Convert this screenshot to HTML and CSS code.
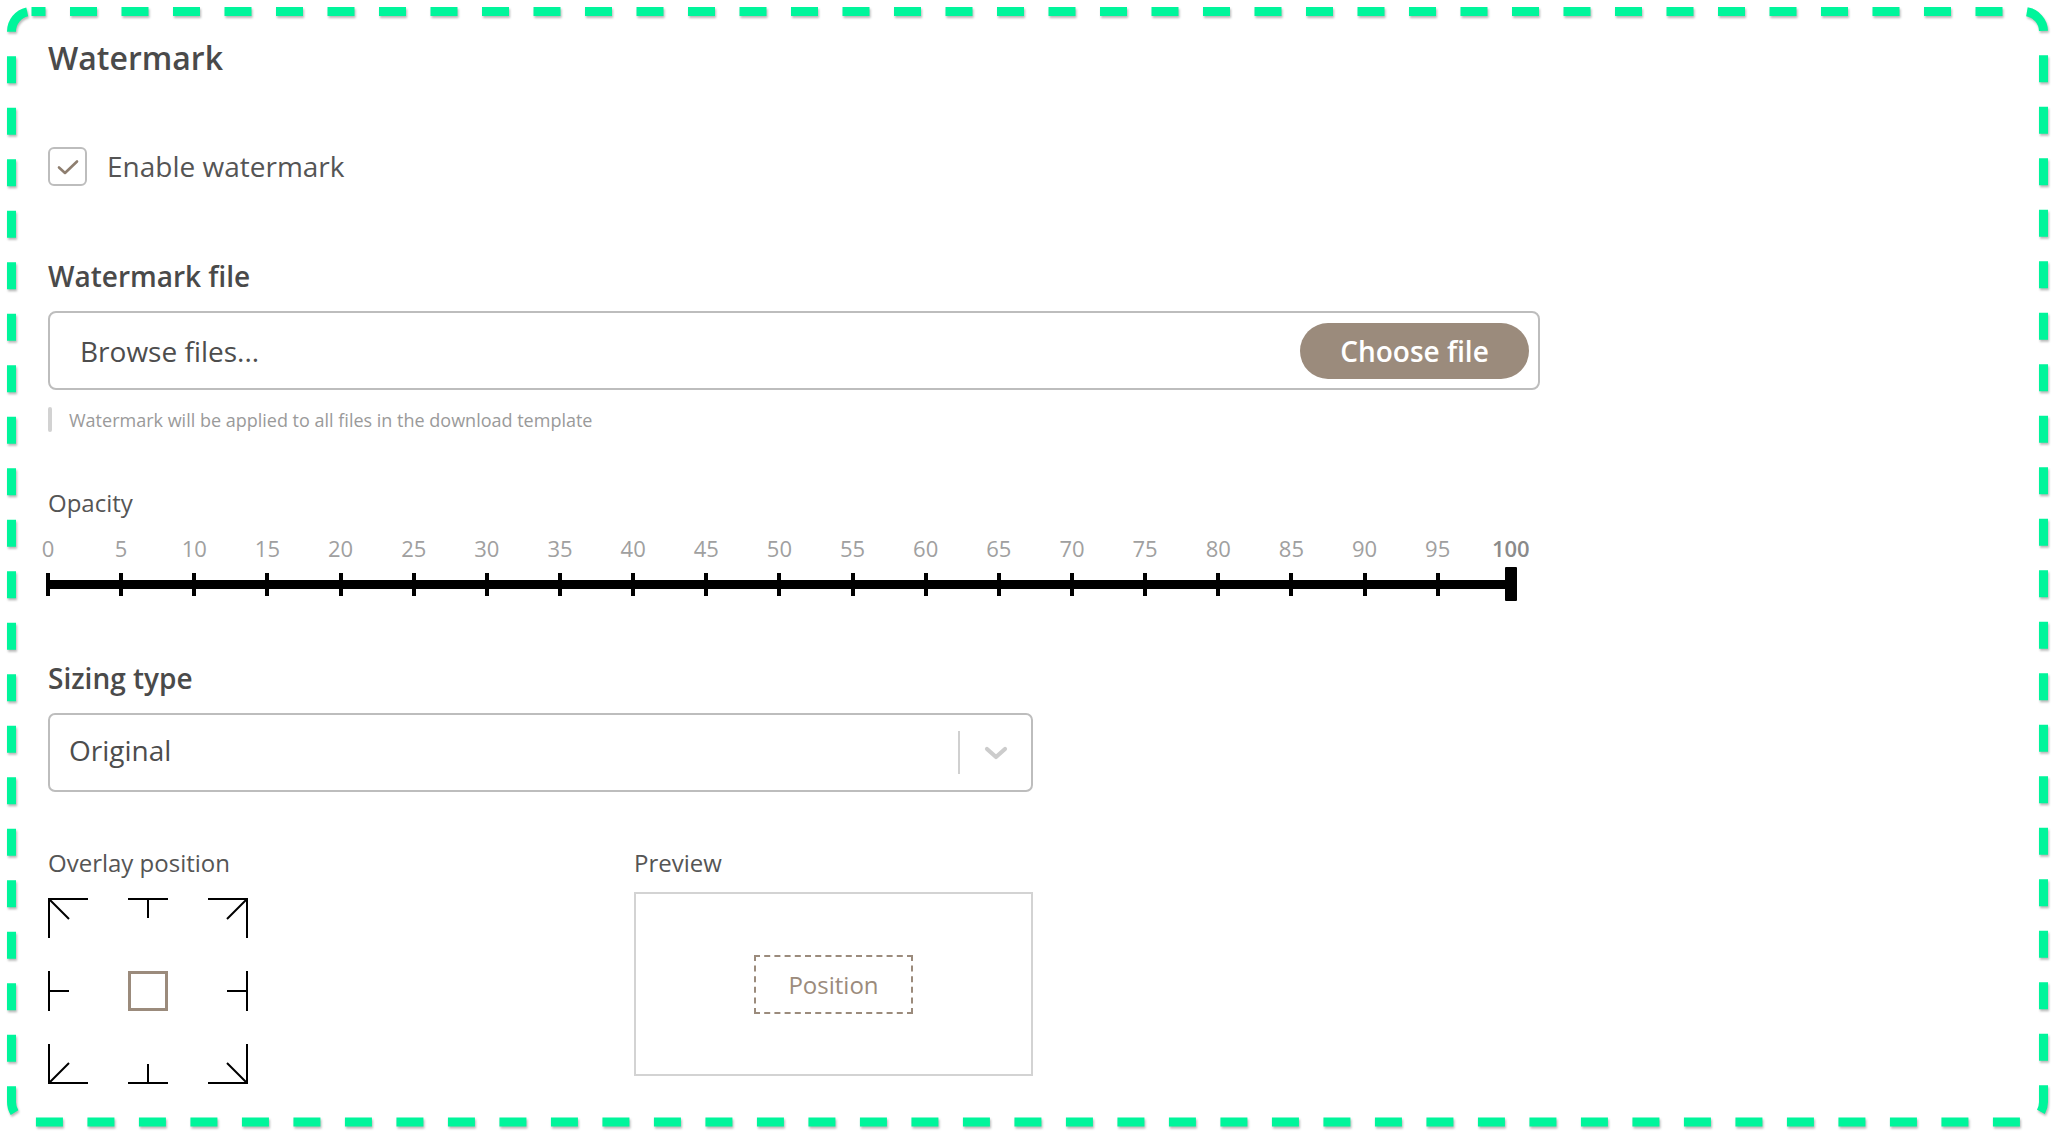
FILE: index.html
```
<!DOCTYPE html>
<html lang="en">
<head>
<meta charset="utf-8">
<title>Watermark</title>
<link rel="stylesheet" href="styles.css">
</head>
<body>
<div class="page">
  <svg class="frame" width="2052" height="1136" viewBox="0 0 2052 1136" aria-hidden="true">
    <rect x="11.5" y="11.5" width="2032" height="1110.5" rx="20" ry="20" />
  </svg>

  <h1 class="title">Watermark</h1>

  <label class="check-row">
    <span class="checkbox">
      <svg width="24" height="18" viewBox="0 0 24 18"><path d="M3 9.5 L9 15 L21 3.5" /></svg>
    </span>
    <span class="check-text">Enable watermark</span>
  </label>

  <h2 class="field-label">Watermark file</h2>
  <div class="file-box">
    <span class="file-placeholder">Browse files...</span>
    <button class="choose-btn" type="button">Choose file</button>
  </div>
  <div class="hint">
    <span class="hint-bar"></span>
    <span class="hint-text">Watermark will be applied to all files in the download template</span>
  </div>

  <div class="small-label opacity-label">Opacity</div>
  <div class="scale-labels">
    <span class="scale-label">0</span>
    <span class="scale-label">5</span>
    <span class="scale-label">10</span>
    <span class="scale-label">15</span>
    <span class="scale-label">20</span>
    <span class="scale-label">25</span>
    <span class="scale-label">30</span>
    <span class="scale-label">35</span>
    <span class="scale-label">40</span>
    <span class="scale-label">45</span>
    <span class="scale-label">50</span>
    <span class="scale-label">55</span>
    <span class="scale-label">60</span>
    <span class="scale-label">65</span>
    <span class="scale-label">70</span>
    <span class="scale-label">75</span>
    <span class="scale-label">80</span>
    <span class="scale-label">85</span>
    <span class="scale-label">90</span>
    <span class="scale-label">95</span>
    <span class="scale-label scale-label-active">100</span>
  </div>
  <div class="slider">
    <span class="tick"></span><span class="tick"></span><span class="tick"></span><span class="tick"></span><span class="tick"></span>
    <span class="tick"></span><span class="tick"></span><span class="tick"></span><span class="tick"></span><span class="tick"></span>
    <span class="tick"></span><span class="tick"></span><span class="tick"></span><span class="tick"></span><span class="tick"></span>
    <span class="tick"></span><span class="tick"></span><span class="tick"></span><span class="tick"></span><span class="tick"></span>
    <span class="thumb"></span>
  </div>

  <h2 class="field-label sizing-label">Sizing type</h2>
  <div class="select">
    <span class="select-value">Original</span>
    <span class="select-sep"></span>
    <span class="select-indicator">
      <svg width="24" height="14" viewBox="0 0 24 14"><path d="M3 3 L12 11 L21 3" /></svg>
    </span>
  </div>

  <div class="bottom">
    <div class="col-position">
      <div class="small-label">Overlay position</div>
      <div class="pos-grid">
        <svg class="pos" viewBox="0 0 40 40"><path d="M1 40 V1 H40 M1 1 L21 21" /></svg>
        <svg class="pos" viewBox="0 0 40 40"><path d="M0 1 H40 M20 1 V20" /></svg>
        <svg class="pos" viewBox="0 0 40 40"><path d="M0 1 H39 V40 M39 1 L19 21" /></svg>
        <svg class="pos" viewBox="0 0 40 40"><path d="M1 0 V40 M1 20 H21" /></svg>
        <svg class="pos pos-active" viewBox="0 0 40 40"><rect x="1.5" y="1.5" width="37" height="37" /></svg>
        <svg class="pos" viewBox="0 0 40 40"><path d="M39 0 V40 M39 20 H19" /></svg>
        <svg class="pos" viewBox="0 0 40 40"><path d="M1 0 V39 H40 M1 39 L21 19" /></svg>
        <svg class="pos" viewBox="0 0 40 40"><path d="M0 39 H40 M20 39 V20" /></svg>
        <svg class="pos" viewBox="0 0 40 40"><path d="M0 39 H39 V0 M39 39 L19 19" /></svg>
      </div>
    </div>
    <div class="col-preview">
      <div class="small-label">Preview</div>
      <div class="preview-box">
        <div class="preview-mark">Position</div>
      </div>
    </div>
  </div>
</div>
</body>
</html>
```

FILE: styles.css
```
* { box-sizing: border-box; }

html, body {
  margin: 0;
  padding: 0;
  background: #ffffff;
}

body {
  font-family: "Open Sans", "Noto Sans", "Liberation Sans", sans-serif;
  color: #555555;
}

.page {
  position: relative;
  width: 2052px;
  height: 1136px;
  padding: 38px 0 0 48px;
  overflow: hidden;
}

.frame {
  position: absolute;
  left: 0;
  top: 0;
  pointer-events: none;
  filter: drop-shadow(1px 2px 1px rgba(0, 0, 0, 0.28));
}

.frame rect {
  fill: none;
  stroke: #00f59b;
  stroke-width: 9;
  stroke-dasharray: 27 24.5;
  stroke-dashoffset: 13;
}

.title {
  margin: 0;
  font-size: 32px;
  line-height: 40px;
  font-weight: 600;
  color: #4a4a4a;
}

.check-row {
  margin-top: 69px;
  display: flex;
  align-items: center;
  gap: 20px;
  height: 39px;
}

.checkbox {
  width: 39px;
  height: 39px;
  border: 2px solid #bdbdbd;
  border-radius: 6px;
  display: flex;
  align-items: center;
  justify-content: center;
}

.checkbox svg path {
  fill: none;
  stroke: #8e7e6f;
  stroke-width: 2.6;
  stroke-linecap: round;
  stroke-linejoin: round;
}

.check-text {
  font-size: 28px;
  line-height: 39px;
  color: #555555;
}

.field-label {
  margin: 72px 0 0 0;
  font-size: 28px;
  line-height: 36px;
  font-weight: 600;
  color: #4a4a4a;
}

.file-box {
  margin-top: 17px;
  width: 1492px;
  height: 79px;
  border: 2px solid #bdbdbd;
  border-radius: 8px;
  display: flex;
  align-items: center;
  justify-content: space-between;
  padding: 0 9px 0 30px;
}

.file-placeholder {
  font-size: 28px;
  color: #4d4d4d;
}

.choose-btn {
  width: 229px;
  height: 56px;
  border: none;
  border-radius: 28px;
  background: #9b8b7c;
  color: #ffffff;
  font-family: inherit;
  font-size: 28px;
  font-weight: 600;
  padding: 0;
}

.hint {
  margin-top: 17px;
  display: flex;
  align-items: flex-start;
  gap: 17px;
  height: 25px;
}

.hint-bar {
  width: 4px;
  height: 25px;
  border-radius: 2px;
  background: #d2d2d2;
}

.hint-text {
  font-size: 18px;
  line-height: 27px;
  color: #9a9a9a;
}

.small-label {
  font-size: 24px;
  line-height: 32px;
  color: #555555;
}

.opacity-label {
  margin-top: 55px;
}

.scale-labels {
  margin-top: 16px;
  width: 1463px;
  height: 26px;
  display: flex;
  justify-content: space-between;
}

.scale-label {
  width: 0;
  display: flex;
  justify-content: center;
  white-space: nowrap;
  font-size: 22px;
  line-height: 26px;
  color: #a0a0a0;
}

.scale-label-active {
  font-weight: 600;
  color: #8a8a8a;
}

.slider {
  margin-top: 6px;
  width: 1463px;
  height: 34px;
  display: flex;
  justify-content: space-between;
  align-items: center;
  background: linear-gradient(#000000, #000000) center / 100% 9px no-repeat;
}

.tick {
  width: 4px;
  height: 23px;
  margin: 0 -2px;
  background: #000000;
}

.thumb {
  width: 12px;
  height: 34px;
  margin: 0 -6px;
  background: #000000;
  border-radius: 1px;
}

.sizing-label {
  margin-top: 59px;
}

.select {
  margin-top: 17px;
  width: 985px;
  height: 79px;
  border: 2px solid #bdbdbd;
  border-radius: 7px;
  display: flex;
  align-items: center;
  padding-left: 19px;
}

.select-value {
  flex: 1;
  font-size: 28px;
  line-height: 36px;
  padding-bottom: 5px;
  color: #4d4d4d;
}

.select-sep {
  width: 2px;
  height: 43px;
  background: #d0d0d0;
}

.select-indicator {
  width: 71px;
  display: flex;
  justify-content: center;
  align-items: center;
}

.select-indicator svg path {
  fill: none;
  stroke: #cccccc;
  stroke-width: 4.2;
  stroke-linecap: round;
  stroke-linejoin: round;
}

.bottom {
  margin-top: 55px;
  display: flex;
}

.col-position {
  width: 586px;
}

.col-preview {
  width: 399px;
}

.pos-grid {
  margin-top: 19px;
  display: grid;
  grid-template-columns: repeat(3, 40px);
  column-gap: 40px;
  row-gap: 33px;
}

.pos {
  width: 40px;
  height: 40px;
  display: block;
}

.pos path {
  fill: none;
  stroke: #000000;
  stroke-width: 2;
}

.pos-active rect {
  fill: none;
  stroke: #9b8b7c;
  stroke-width: 3;
}

.preview-box {
  margin-top: 13px;
  width: 399px;
  height: 184px;
  border: 2px solid #d3d3d3;
  display: flex;
  align-items: center;
  justify-content: center;
}

.preview-mark {
  width: 159px;
  height: 59px;
  border: 2px dashed #9b8b7c;
  display: flex;
  align-items: center;
  justify-content: center;
  font-size: 24px;
  color: #9b8b7c;
}
```
